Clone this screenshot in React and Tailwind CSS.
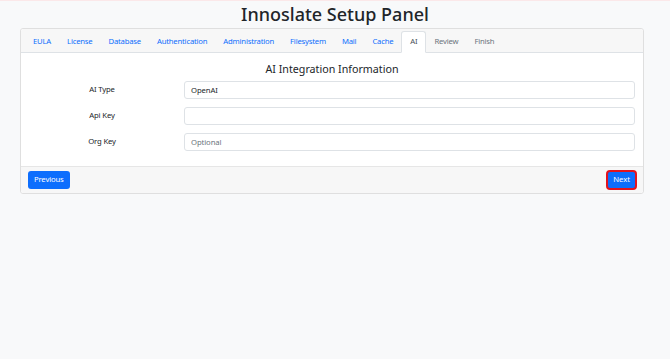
const tabs = [
  { name: "EULA", state: "link" },
  { name: "License", state: "link" },
  { name: "Database", state: "link" },
  { name: "Authentication", state: "link" },
  { name: "Administration", state: "link" },
  { name: "Filesystem", state: "link" },
  { name: "Mail", state: "link" },
  { name: "Cache", state: "link" },
  { name: "AI", state: "active" },
  { name: "Review", state: "disabled" },
  { name: "Finish", state: "disabled" },
];

const fields = [
  { label: "AI Type", value: "OpenAI", placeholder: "" },
  { label: "Api Key", value: "", placeholder: "" },
  { label: "Org Key", value: "", placeholder: "Optional" },
];

const tabClass = {
  link: "text-[#0d6efd]",
  active: "-mb-px border border-[#dee2e6] border-b-white bg-white text-[#495057]",
  disabled: "text-[#6c757d]",
};

const App = () => {
  return (
    <div
      className="min-h-screen w-full border-t border-[#fbe8e9] bg-[#f8f9fa] text-[#212529]"
      style={{ fontFamily: '"Noto Sans", "Open Sans", sans-serif' }}
    >
      <h1 className="pt-[1px] text-center text-[18px] font-medium leading-[24px] text-[#212529]">
        Innoslate Setup Panel
      </h1>

      <div className="mx-[20px] mt-[2px] w-[624px] rounded-[3px] border border-[#dfdfdf] bg-white">
        <div className="flex h-[24px] items-end rounded-t-[3px] border-b border-[#dee2e6] bg-[#f7f7f7] pl-[4px]">
          {tabs.map((tab) => (
            <div
              key={tab.name}
              className={`rounded-t-[3px] px-[8px] pb-[5px] pt-[4px] text-[7.7px] leading-[11px] tracking-[-0.2px] ${tabClass[tab.state]}`}
            >
              {tab.name}
            </div>
          ))}
        </div>

        <div className="px-[8px] pb-[15px] pt-[8px]">
          <h4 className="mb-[4px] text-center text-[10.7px] leading-[16px] text-[#212529]">
            AI Integration Information
          </h4>

          <div className="flex flex-col gap-[8px]">
            {fields.map((field) => (
              <div key={field.label} className="flex items-center">
                <label className="w-[146px] text-center text-[7.7px] tracking-[-0.15px] text-[#212529]">
                  {field.label}
                </label>
                <input
                  readOnly
                  value={field.value}
                  placeholder={field.placeholder}
                  className="ml-[9px] h-[18px] flex-1 rounded-[3px] border border-[#dee2e6] bg-white px-[6px] text-[7.7px] tracking-[-0.1px] text-[#212529] outline-none placeholder:text-[#6c757d]"
                />
              </div>
            ))}
          </div>
        </div>

        <div className="flex h-[27px] items-center justify-between rounded-b-[3px] border-t border-[#e6e6e6] bg-[#f7f7f7] pl-[7px] pr-[6px]">
          <button className="h-[18px] rounded-[3px] bg-[#0d6efd] px-[6px] text-[7.7px] tracking-[-0.15px] text-white">
            Previous
          </button>
          <button className="h-[20px] rounded-[4px] border-2 border-[#e3141f] bg-[#0d6efd] px-[5px] text-[7.7px] text-white">
            Next
          </button>
        </div>
      </div>
    </div>
  );
};

export default App;
